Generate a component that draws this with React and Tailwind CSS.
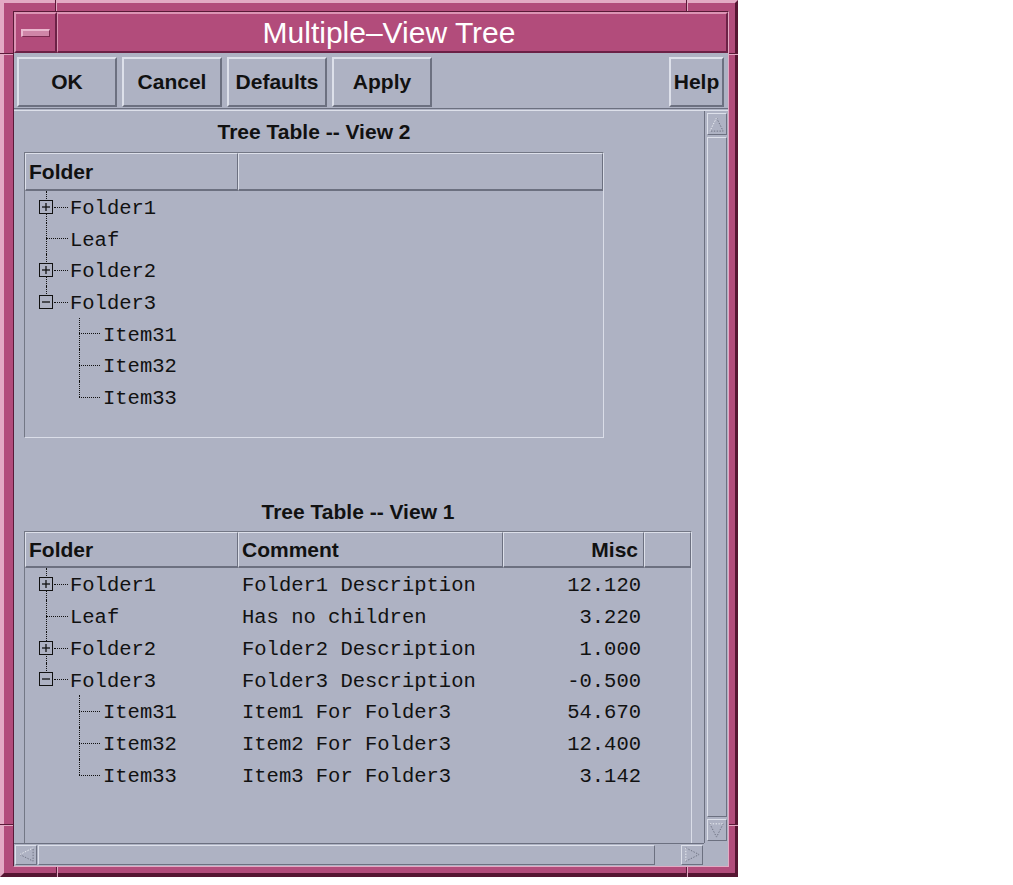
import React from 'react';

const sans = "font-['Liberation_Sans',Arial,sans-serif]";
const mono = "font-['Liberation_Mono','Courier_New',monospace]";
const raised =
  'border-t border-l border-r border-b border-t-[#dde0ea] border-l-[#dde0ea] border-r-[#6c7080] border-b-[#6c7080]';

const rows = [
  { name: 'Folder1', depth: 0, kind: 'plus', comment: 'Folder1 Description', misc: '12.120' },
  { name: 'Leaf', depth: 0, kind: 'leaf', comment: 'Has no children', misc: '3.220' },
  { name: 'Folder2', depth: 0, kind: 'plus', comment: 'Folder2 Description', misc: '1.000' },
  { name: 'Folder3', depth: 0, kind: 'minus', last: true, comment: 'Folder3 Description', misc: '-0.500' },
  { name: 'Item31', depth: 1, kind: 'leaf', comment: 'Item1 For Folder3', misc: '54.670' },
  { name: 'Item32', depth: 1, kind: 'leaf', comment: 'Item2 For Folder3', misc: '12.400' },
  { name: 'Item33', depth: 1, kind: 'leaf', last: true, comment: 'Item3 For Folder3', misc: '3.142' },
];

function ExpandBox({ open }) {
  return (
    <svg width="14" height="14" viewBox="0 0 14 14" className="absolute left-[14px] top-1/2 -translate-y-1/2">
      <rect x="0.5" y="0.5" width="13" height="13" fill="#aeb2c3" stroke="#111" />
      <path d="M3 7h8" stroke="#111" strokeWidth="1.3" />
      {!open && <path d="M7 3v8" stroke="#111" strokeWidth="1.3" />}
    </svg>
  );
}

function TreeCell({ row }) {
  const dot = 'absolute border-dotted border-[#111]';
  return (
    <div className="relative h-full w-full">
      {row.depth === 0 && (
        <div className={`${dot} left-[21px] top-0 border-l ${row.last ? 'h-1/2' : 'bottom-0'}`} />
      )}
      {row.depth === 0 && row.kind === 'leaf' && (
        <div className={`${dot} left-[21px] top-1/2 w-[22px] border-t`} />
      )}
      {row.depth === 0 && row.kind !== 'leaf' && (
        <>
          <div className={`${dot} left-[29px] top-1/2 w-[14px] border-t`} />
          <ExpandBox open={row.kind === 'minus'} />
        </>
      )}
      {row.depth === 1 && (
        <>
          <div className={`${dot} left-[54px] top-0 border-l ${row.last ? 'h-1/2' : 'bottom-0'}`} />
          <div className={`${dot} left-[54px] top-1/2 w-[21px] border-t`} />
        </>
      )}
      <div
        className={`flex h-full items-center pt-[5px] ${mono} text-[20.5px] text-[#111] ${
          row.depth === 0 ? 'pl-[45px]' : 'pl-[78px]'
        }`}
      >
        {row.name}
      </div>
    </div>
  );
}

function HeaderCell({ className = '', children }) {
  return (
    <div
      className={`flex h-full items-center border-t border-l border-r border-b-2 border-t-[#dde0ea] border-l-[#dde0ea] border-r-[#6c7080] border-b-[#6c7080] px-[3px] ${sans} text-[21px] font-bold text-[#111] ${className}`}
    >
      {children}
    </div>
  );
}

function TreeTable({ full }) {
  return (
    <div
      className={`border-t border-l border-r border-b border-t-[#737785] border-l-[#737785] border-r-[#dadde8] border-b-[#dadde8] ${
        full ? 'h-[340px] w-[668px]' : 'h-[286px] w-[580px]'
      }`}
    >
      <div className={`flex ${full ? 'h-[36px]' : 'h-[38px]'}`}>
        <HeaderCell className="w-[213px]">Folder</HeaderCell>
        {full ? (
          <>
            <HeaderCell className="w-[265px]">Comment</HeaderCell>
            <HeaderCell className="w-[141px] justify-end pr-[5px]">Misc</HeaderCell>
            <HeaderCell className="flex-1" />
          </>
        ) : (
          <HeaderCell className="flex-1" />
        )}
      </div>
      {rows.map((row) => (
        <div key={row.name} className={`flex ${full ? 'h-[31.83px]' : 'h-[31.67px]'}`}>
          <div className="h-full w-[213px]">
            <TreeCell row={row} />
          </div>
          {full && (
            <>
              <div className={`flex w-[265px] items-center pt-[5px] pl-[4px] ${mono} text-[20.5px] text-[#111] whitespace-pre`}>
                {row.comment}
              </div>
              <div className={`flex w-[141px] items-center justify-end pt-[5px] pr-[3px] ${mono} text-[20.5px] text-[#111]`}>
                {row.misc}
              </div>
            </>
          )}
        </div>
      ))}
    </div>
  );
}

function Arrow({ dir, className = '' }) {
  const paths = {
    up: { light: 'M9 3L2 17', dark: 'M9 3L16 17L2 17' },
    down: { light: 'M2 3L16 3', dark: 'M16 3L9 17L2 3' },
    left: { light: 'M3 9L17 2', dark: 'M3 9L17 16L17 2' },
    right: { light: 'M3 2L3 16', dark: 'M3 2L17 9L3 16' },
  }[dir];
  return (
    <div className={`flex items-center justify-center ${raised} ${className}`}>
      <svg width="18" height="18" viewBox="0 0 19 19">
        <path d={paths.dark} fill="none" stroke="#6c7080" strokeDasharray="1.5 1.5" />
        <path d={paths.light} fill="none" stroke="#eef0f6" strokeDasharray="1.5 1.5" />
      </svg>
    </div>
  );
}

function Button({ children, className = '' }) {
  return (
    <div
      className={`flex h-[50px] items-center justify-center border-2 border-t-[#dde0ea] border-l-[#dde0ea] border-r-[#6c7080] border-b-[#6c7080] ${sans} text-[21px] font-bold text-[#111] ${className}`}
    >
      {children}
    </div>
  );
}

export default function App() {
  return (
    <div className="h-[885px] w-[1013px] bg-white">
      <div className="relative flex h-[877px] w-[738px] flex-col border-t-[3px] border-l-[4px] border-r-[3px] border-b-[4px] border-t-[#e3aac4] border-l-[#e3aac4] border-r-[#561632] border-b-[#561632] bg-[#b24c7b] pt-[8px] pl-[9px] pr-[6px] pb-[6px]">
        {/* resize corner marks */}
        <div className="absolute -top-[3px] left-[51px] h-[11px] w-[2px] border-l border-r border-l-[#5a1a38] border-r-[#e3aac4]" />
        <div className="absolute -top-[3px] left-[682px] h-[11px] w-[2px] border-l border-r border-l-[#5a1a38] border-r-[#e3aac4]" />
        <div className="absolute -bottom-[4px] left-[52px] h-[10px] w-[2px] border-l border-r border-l-[#5a1a38] border-r-[#e3aac4]" />
        <div className="absolute -bottom-[4px] left-[682px] h-[10px] w-[2px] border-l border-r border-l-[#5a1a38] border-r-[#e3aac4]" />
        <div className="absolute -left-[4px] top-[50px] h-[2px] w-[13px] border-t border-b border-t-[#5a1a38] border-b-[#e3aac4]" />
        <div className="absolute -left-[4px] top-[821px] h-[2px] w-[13px] border-t border-b border-t-[#5a1a38] border-b-[#e3aac4]" />
        <div className="absolute -right-[3px] top-[50px] h-[2px] w-[9px] border-t border-b border-t-[#5a1a38] border-b-[#e3aac4]" />
        <div className="absolute -right-[3px] top-[821px] h-[2px] w-[9px] border-t border-b border-t-[#5a1a38] border-b-[#e3aac4]" />

        <div className="flex flex-1 flex-col border border-t-[#5a1a38] border-l-[#5a1a38] border-r-[#e3aac4] border-b-[#e3aac4] bg-[#aeb2c3]">
          {/* title bar */}
          <div className="flex h-[41px]">
            <div className="flex w-[43px] items-center justify-center border-t-2 border-l-2 border-r-2 border-b-2 border-t-[#dc94b4] border-l-[#dc94b4] border-r-[#6b2146] border-b-[#6b2146] bg-[#b24c7b]">
              <div className="h-[8px] w-[29px] border-t-2 border-l-2 border-r border-b border-t-[#eab8cf] border-l-[#eab8cf] border-r-[#7a2a50] border-b-[#7a2a50] bg-[#cf86a8]" />
            </div>
            <div className="flex flex-1 items-center justify-center border-t-2 border-l border-r-2 border-b-2 border-t-[#dc94b4] border-l-[#dc94b4] border-r-[#6b2146] border-b-[#6b2146] bg-[#b24c7b] pr-[6px] font-['Liberation_Sans',Arial,sans-serif] text-[30px] leading-none text-white">
              Multiple–View Tree
            </div>
          </div>

          {/* button bar */}
          <div className="flex h-[55px] items-start gap-[5px] pt-[4px] pl-[3px] pr-[4px]">
            <Button className="w-[100px]">OK</Button>
            <Button className="w-[100px]">Cancel</Button>
            <Button className="w-[100px]">Defaults</Button>
            <Button className="w-[100px]">Apply</Button>
            <Button className="ml-auto w-[55px]">Help</Button>
          </div>
          <div className="h-[3px] border-t border-b border-t-[#6c7080] border-b-[#dde0ea]" />

          {/* scrolled area */}
          <div className="flex h-[732px]">
            <div className="w-[690px] overflow-hidden pl-[10px]">
              <div className={`flex h-[41px] w-[580px] items-center justify-center ${sans} text-[21px] font-bold text-[#111]`}>
                Tree Table -- View 2
              </div>
              <TreeTable />
              <div className="h-[55px]" />
              <div className={`flex h-[38px] w-[668px] items-center justify-center ${sans} text-[21px] font-bold text-[#111]`}>
                Tree Table -- View 1
              </div>
              <TreeTable full />
            </div>
            <div className="flex w-[24px] flex-col border-l border-l-[#6c7080] py-[2px] pl-[2px] pr-[1px]">
              <Arrow dir="up" className="h-[22px]" />
              <div className={`mt-[2px] mb-[2px] flex-1 ${raised}`} />
              <Arrow dir="down" className="h-[22px]" />
            </div>
          </div>

          {/* horizontal scrollbar */}
          <div className="flex h-[23px]">
            <div className="flex w-[690px] border-t border-t-[#6c7080] p-[1px]">
              <Arrow dir="left" className="w-[22px]" />
              <div className={`ml-[1px] w-[617px] ${raised}`} />
              <div className="flex-1" />
              <Arrow dir="right" className="w-[22px]" />
            </div>
            <div className="w-[24px]" />
          </div>
        </div>
      </div>
    </div>
  );
}
